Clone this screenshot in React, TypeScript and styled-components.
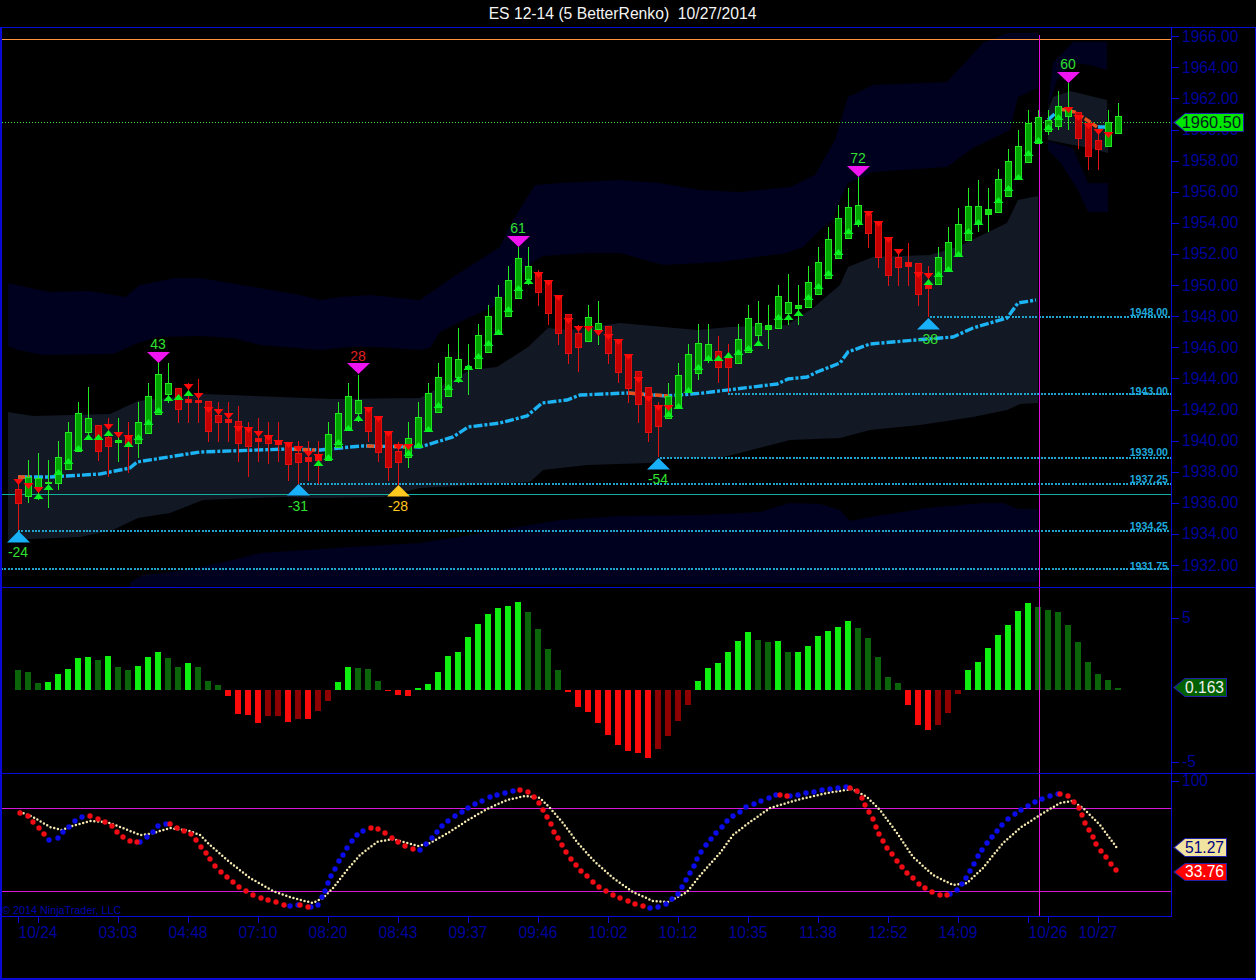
import React from "react";
import styled, { createGlobalStyle } from "styled-components";

// every drawing below uses page pixels, the viewBox of each pane maps them 1:1
const barX = (i: number) => 18.5 + 10 * i;
const pts = (list: number[][]) => list.map((p) => p.join(",")).join(" ");

// [colour, body top, body bottom, wick top, wick bottom, up marker y, down marker y]
type Bar = ["g" | "r", number, number, number, number, number?, number?];

const BARS: Bar[] = [
  ["r", 489, 503, 483, 530, undefined, 482],
  ["g", 477, 496, 460, 503, undefined, 486],
  ["g", 478, 487, 453, 500, 496, 490],
  ["g", 482, 483, 460, 508, 487],
  ["g", 457, 483, 441, 490, 472],
  ["g", 432, 469, 422, 469, 461],
  ["g", 413, 451, 402, 451, 448],
  ["g", 418, 432, 387, 437, 437],
  ["r", 425, 451, 425, 461, 437],
  ["r", 437, 446, 418, 477, 433, 427],
  ["g", 440, 442, 418, 462, undefined, 435],
  ["r", 437, 445, 422, 473, 444, 438],
  ["g", 422, 443, 402, 458, 437],
  ["g", 396, 433, 383, 433, 422],
  ["g", 374, 414, 362, 414, 410],
  ["g", 383, 394, 363, 403, 398],
  ["r", 388, 409, 388, 423, 397],
  ["r", 399, 402, 383, 423, 393, 387],
  ["r", 400, 402, 379, 423, undefined, 396],
  ["r", 401, 431, 401, 442, undefined, 410],
  ["r", 415, 422, 402, 442, undefined, 412],
  ["r", 419, 422, 402, 442, undefined, 416],
  ["r", 421, 443, 406, 462, undefined, 429],
  ["r", 429, 446, 422, 477, undefined, 430],
  ["r", 438, 441, 418, 462, undefined, 434],
  ["r", 437, 443, 422, 464, undefined, 438],
  ["r", 442, 444, 422, 462, undefined, 443],
  ["r", 442, 464, 442, 481, undefined, 445],
  ["r", 453, 462, 441, 484, undefined, 449],
  ["r", 457, 461, 441, 481, undefined, 454],
  ["r", 456, 460, 441, 484, 463, 457],
  ["g", 434, 460, 422, 460, 457],
  ["g", 413, 447, 402, 447, 442],
  ["g", 396, 430, 383, 430, 428],
  ["g", 400, 413, 375, 422, 418],
  ["r", 408, 431, 408, 442, undefined, 410],
  ["r", 418, 452, 418, 462, undefined, 419],
  ["r", 433, 467, 433, 481, undefined, 434],
  ["r", 451, 462, 442, 485, undefined, 447],
  ["g", 438, 457, 422, 468, 453, 447],
  ["g", 417, 447, 402, 447, 445],
  ["g", 393, 431, 383, 431, 429],
  ["g", 377, 412, 363, 412, 405],
  ["g", 357, 396, 344, 396, 387],
  ["g", 359, 377, 328, 383, 379],
  ["g", 366, 368, 344, 395, 367],
  ["g", 335, 368, 324, 368, 356],
  ["g", 316, 352, 305, 352, 343],
  ["g", 297, 333, 285, 333, 332],
  ["g", 280, 316, 266, 316, 309],
  ["g", 258, 298, 247, 298, 288],
  ["g", 266, 279, 247, 285, 281],
  ["r", 272, 292, 270, 306, undefined, 275],
  ["r", 281, 313, 281, 325, undefined, 283],
  ["r", 297, 333, 297, 345, undefined, 298],
  ["r", 314, 353, 314, 364, undefined, 321],
  ["r", 333, 347, 325, 372, undefined, 329],
  ["g", 317, 341, 305, 341, undefined, 329],
  ["g", 323, 329, 301, 345, undefined, 333],
  ["r", 326, 353, 326, 364, undefined, 337],
  ["r", 339, 372, 339, 383, undefined, 342],
  ["r", 355, 388, 355, 403, undefined, 357],
  ["r", 371, 404, 371, 423, undefined, 380],
  ["r", 387, 432, 387, 442, undefined, 399],
  ["r", 406, 426, 402, 457, undefined, 408],
  ["g", 396, 418, 383, 418, 414, 408],
  ["g", 375, 407, 363, 407, 406],
  ["g", 354, 392, 344, 392, 390],
  ["g", 343, 373, 324, 380, 367],
  ["g", 344, 360, 324, 363, 358],
  ["r", 351, 367, 336, 383, 358],
  ["r", 358, 367, 344, 393, 355],
  ["g", 339, 363, 324, 363, 352],
  ["g", 318, 352, 305, 352, 348],
  ["g", 323, 335, 301, 345, 343],
  ["g", 325, 329, 305, 349],
  ["g", 296, 328, 285, 328, 317],
  ["g", 302, 313, 274, 325, 317],
  ["g", 305, 308, 285, 325, 313],
  ["g", 282, 307, 266, 307, 297],
  ["g", 262, 294, 247, 294, 286],
  ["g", 239, 278, 227, 278, 273],
  ["g", 218, 258, 205, 258, 252],
  ["g", 207, 238, 188, 238, 231],
  ["g", 205, 223, 177, 227, 222],
  ["r", 214, 233, 212, 248, undefined, 214],
  ["r", 223, 257, 223, 268, undefined, 224],
  ["r", 239, 275, 239, 286, undefined, 240],
  ["r", 257, 267, 250, 286, undefined, 252],
  ["r", 262, 266, 243, 286],
  ["r", 263, 294, 263, 306, undefined, 275],
  ["r", 283, 288, 266, 317, 282, 276],
  ["g", 257, 284, 247, 284, 274],
  ["g", 242, 271, 227, 271, 269],
  ["g", 224, 256, 208, 256, 254],
  ["g", 206, 240, 188, 240, 231],
  ["g", 206, 224, 180, 232, 222],
  ["g", 209, 214, 188, 232],
  ["g", 179, 212, 169, 212, 200],
  ["g", 161, 196, 149, 196, 188],
  ["g", 146, 178, 130, 178, 177],
  ["g", 123, 162, 110, 162, 153],
  ["g", 117, 143, 110, 143, 140],
  ["g", 120, 131, 110, 135, 127],
  ["g", 106, 126, 91, 130, 117],
  ["g", 108, 116, 83, 130, undefined, 110],
  ["r", 112, 138, 112, 149, undefined, 118],
  ["r", 125, 156, 125, 170, undefined, 126],
  ["r", 140, 149, 130, 170, undefined, 132],
  ["g", 122, 146, 110, 146, undefined, 135],
  ["g", 116, 133, 103, 133],
];

const UPPER_BAND = [
  [8, 283], [30, 288], [50, 292], [90, 291], [125, 297], [140, 285], [175, 278], [200, 278], [230, 283],
  [300, 295], [320, 300], [340, 297], [370, 295], [420, 300], [453, 277], [500, 247], [513, 220], [535, 185],
  [560, 183], [620, 180], [660, 183], [700, 190], [740, 192], [790, 187], [815, 175], [835, 140], [848, 97],
  [873, 85], [947, 82], [983, 43], [1007, 33], [1038, 33], [1038, 88], [1018, 97], [1010, 130], [973, 148],
  [947, 167], [873, 172], [848, 183], [840, 200], [833, 220], [820, 230], [803, 247], [787, 253], [720, 262],
  [663, 265], [620, 253], [587, 253], [543, 256], [533, 262], [497, 305], [470, 317], [440, 332], [430, 348],
  [420, 350], [377, 347], [350, 347], [320, 350], [260, 345], [233, 338], [200, 336], [158, 337], [138, 343],
  [113, 354], [43, 355], [18, 350], [8, 346],
];
const UPPER_TAIL = [
  [1048, 107], [1053, 63], [1073, 42], [1107, 42], [1107, 70], [1090, 65], [1073, 63], [1057, 80],
];
const INNER_BAND = [
  [8, 412], [33, 416], [110, 414], [138, 401], [203, 394], [280, 397], [333, 399], [420, 398], [470, 370],
  [497, 367], [528, 347], [548, 328], [570, 330], [620, 323], [697, 330], [730, 327], [787, 325], [813, 308],
  [840, 285], [848, 267], [873, 257], [930, 255], [957, 247], [1007, 223], [1018, 200], [1038, 196],
  [1038, 403], [1020, 404], [1007, 410], [973, 417], [920, 425], [870, 430], [840, 438], [790, 440], [763, 447],
  [720, 458], [670, 458], [650, 463], [587, 465], [543, 470], [530, 482], [420, 488], [383, 497], [317, 498],
  [283, 497], [203, 500], [170, 513], [138, 518], [113, 530], [80, 537], [8, 540],
];
const INNER_TAIL = [
  [1048, 110], [1053, 97], [1070, 91], [1107, 100], [1108, 153], [1090, 148], [1073, 145], [1048, 140],
];
const LOWER_BAND = [
  [130, 582], [143, 575], [187, 570], [233, 560], [260, 553], [350, 547], [420, 543], [470, 535], [530, 525],
  [560, 520], [620, 516], [700, 515], [760, 512], [790, 503], [820, 504], [840, 510], [850, 521], [870, 517],
  [927, 508], [983, 503], [1003, 503], [1018, 509], [1038, 509], [1038, 582], [130, 587],
];
const LOWER_TAIL = [
  [1048, 141], [1073, 148], [1088, 183], [1108, 183], [1108, 212], [1088, 212], [1078, 190], [1060, 162], [1048, 150],
];

const MA_LINE = [
  [18, 477], [50, 477], [100, 474], [130, 468], [137, 462], [200, 452], [287, 449], [320, 450], [350, 447],
  [363, 446], [420, 447], [453, 437], [468, 427], [500, 423], [527, 416], [542, 403], [567, 400], [580, 395],
  [627, 393], [667, 396], [703, 393], [777, 384], [788, 379], [807, 377], [817, 372], [840, 363], [848, 352],
  [870, 344], [927, 339], [953, 337], [973, 328], [1007, 318], [1018, 303], [1036, 300],
];
const MA_TAIL = [[1048, 120], [1060, 109]];
const MA_TAIL_END = [[1098, 127], [1113, 127]];
const MA_RED = [
  [[18, 477], [30, 477]],
  [[285, 449], [315, 450]],
  [[367, 446], [410, 447]],
  [[628, 393], [668, 396]],
  [[1060, 109], [1075, 112], [1090, 122], [1097, 127]],
];

const LEVELS = [
  { y: 317, from: 930, text: "1948.00", ty: 316 },
  { y: 394, from: 728, text: "1943.00", ty: 395 },
  { y: 458, from: 660, text: "1939.00", ty: 456 },
  { y: 484, from: 300, text: "1937.25", ty: 483 },
  { y: 531, from: 18, text: "1934.25", ty: 530 },
  { y: 569, from: 1, text: "1931.75", ty: 570 },
];

const SIGNALS = [
  { x: 158, y: 352, down: true, fill: "#f014f0", label: "43", ly: 350, tone: "#30e030" },
  { x: 358, y: 363, down: true, fill: "#f014f0", label: "28", ly: 362, tone: "#e02020" },
  { x: 518, y: 236, down: true, fill: "#f014f0", label: "61", ly: 234, tone: "#30e030" },
  { x: 858, y: 166, down: true, fill: "#f014f0", label: "72", ly: 164, tone: "#30e030" },
  { x: 1068, y: 72, down: true, fill: "#f014f0", label: "60", ly: 70, tone: "#30e030" },
  { x: 18, y: 531, down: false, fill: "#18b0f8", label: "-24", ly: 557, tone: "#30e030" },
  { x: 298, y: 484, down: false, fill: "#18b0f8", label: "-31", ly: 511, tone: "#30e030" },
  { x: 398, y: 485, down: false, fill: "#ffc81e", label: "-28", ly: 511, tone: "#ffc81e" },
  { x: 658, y: 458, down: false, fill: "#18b0f8", label: "-54", ly: 484, tone: "#30e030" },
  { x: 928, y: 318, down: false, fill: "#18b0f8", label: "-38", ly: 344, tone: "#30e030" },
];

const HISTOGRAM = [
  20, 18, 7, 8, 16, 21, 32, 33, 30, 34, 23, 20, 24, 33, 38, 32, 23, 27, 23, 9, 5, -6, -24, -25, -33, -26, -26, -32,
  -29, -29, -21, -11, 8, 23, 22, 21, 9, -1, -5, -6, 2, 6, 18, 34, 38, 53, 66, 76, 82, 84, 88, 78, 61, 41, 20, -2, -17,
  -22, -33, -45, -55, -61, -63, -68, -59, -46, -31, -15, 9, 22, 27, 38, 49, 58, 50, 48, 49, 38, 38, 44, 54, 59, 63, 69,
  62, 52, 33, 13, 7, -15, -35, -40, -35, -23, -4, 20, 28, 42, 55, 65, 79, 87, 83, 80, 78, 65, 48, 28, 16, 10, 2,
];
const HIST_FADED = new Set([
  0, 1, 2, 8, 10, 11, 15, 16, 18, 19, 20, 25, 26, 28, 30, 31, 34, 35, 36, 51, 52, 53, 54, 64, 65, 66, 67, 74, 75, 77, 84,
  85, 86, 87, 88, 92, 93, 94, 102, 103, 104, 105, 106, 107, 108, 109, 110,
]);

// fast stochastic, one run per colour change
const FAST_RED = [
  [[20, 813], [28, 816], [33, 822], [39, 828], [44, 834]],
  [[90, 816], [98, 819], [105, 822], [112, 826], [117, 832], [123, 837], [130, 841], [137, 842]],
  [[170, 824], [177, 828], [184, 831], [191, 834], [196, 840], [201, 847], [206, 853], [210, 859], [215, 866], [221, 872],
    [227, 877], [233, 882], [239, 887], [246, 891], [253, 895], [261, 898], [268, 900], [276, 902], [284, 905]],
  [[300, 905], [308, 907]],
  [[371, 828], [378, 829], [385, 833], [392, 838], [398, 842], [405, 846], [413, 849]],
  [[520, 790], [528, 792], [534, 797], [539, 803], [543, 810], [547, 817], [551, 824], [554, 832], [558, 838], [562, 845],
    [566, 852], [571, 859], [576, 865], [581, 871], [587, 876], [593, 882], [599, 887], [606, 891], [613, 895], [620, 898],
    [628, 901], [635, 904], [643, 906]],
  [[780, 795], [787, 796]],
  [[850, 788], [857, 791], [862, 798], [865, 805], [869, 812], [873, 819], [876, 827], [879, 834], [883, 841], [887, 848],
    [892, 854], [897, 861], [902, 867], [907, 873], [913, 878], [919, 884], [925, 888], [932, 892], [940, 895], [947, 895]],
  [[1060, 794], [1068, 796], [1074, 802], [1079, 808], [1082, 815], [1085, 823], [1089, 830], [1093, 837], [1096, 844],
    [1101, 851], [1106, 857], [1111, 864], [1116, 870]],
].flat();
const FAST_BLUE = [
  [49, 840], [58, 838], [63, 832], [69, 827], [75, 821], [82, 817], [140, 842], [147, 837], [153, 832], [158, 826], [166, 824],
  [290, 906], [298, 905], [311, 907], [318, 905], [322, 897], [325, 891], [328, 883], [331, 876], [335, 869], [339, 861],
  [343, 855], [347, 848], [352, 841], [357, 835], [363, 831], [420, 850], [426, 844], [432, 838], [437, 832], [442, 826],
  [448, 821], [455, 816], [462, 812], [468, 808], [475, 804], [482, 801], [490, 797], [497, 795], [505, 793], [513, 791],
  [650, 908], [658, 907], [666, 904], [672, 899], [678, 894], [682, 887], [686, 880], [690, 873], [694, 866], [697, 859],
  [701, 852], [706, 845], [711, 839], [716, 833], [722, 827], [727, 821], [733, 816], [740, 812], [746, 807], [754, 804],
  [761, 801], [769, 798], [776, 795], [790, 796], [798, 795], [806, 793], [814, 792], [822, 790], [830, 789], [838, 788],
  [846, 787], [950, 894], [957, 890], [962, 884], [966, 878], [970, 871], [974, 864], [978, 856], [982, 850], [987, 843],
  [992, 837], [997, 831], [1002, 825], [1008, 819], [1015, 814], [1021, 810], [1028, 806], [1035, 802], [1042, 799],
  [1050, 796], [1058, 794],
];
const SLOW_LINE = [
  [20, 812], [33, 817], [50, 827], [62, 830], [72, 826], [90, 821], [107, 822], [123, 828], [140, 835], [150, 834],
  [170, 828], [190, 831], [200, 835], [210, 845], [227, 860], [250, 878], [273, 891], [293, 898], [313, 903], [323, 898],
  [333, 888], [347, 870], [360, 855], [377, 842], [392, 839], [400, 841], [418, 846], [430, 843], [448, 833], [468, 820],
  [487, 809], [507, 800], [525, 796], [540, 798], [550, 808], [563, 823], [577, 842], [593, 860], [613, 878], [633, 892],
  [653, 901], [668, 902], [687, 892], [703, 872], [720, 853], [733, 835], [750, 822], [770, 808], [797, 800], [827, 793],
  [852, 789], [867, 797], [880, 810], [897, 833], [913, 857], [933, 875], [953, 885], [967, 883], [983, 868], [1003, 843],
  [1020, 828], [1040, 815], [1060, 803], [1072, 801], [1083, 808], [1100, 825], [1117, 848],
];

const PRICE_TICKS = Array.from({ length: 18 }, (_, i) => (1966 - i * 2).toFixed(2));
// bar index of each tick on the time axis, label is optional
const TIME_TICKS: [number, string?][] = [
  [0], [2, "10/24"], [10, "03:03"], [17, "04:48"], [24, "07:10"], [31, "08:20"], [38, "08:43"], [45, "09:37"], [52, "09:46"],
  [59, "10:02"], [66, "10:12"], [73, "10:35"], [80, "11:38"], [87, "12:52"], [94, "14:09"], [101], [103, "10/26"], [108, "10/27"],
];

const GlobalStyle = createGlobalStyle`
  html, body {
    margin: 0;
    padding: 0;
    background: #000;
  }
`;

const Page = styled.div`
  width: 1256px;
  height: 980px;
  background: #000;
  display: flex;
  flex-direction: column;
  overflow: hidden;
  font-family: "Liberation Sans", Arial, sans-serif;
`;

const TitleBar = styled.div`
  height: 27px;
  flex: none;
  padding-right: 11px;
  display: flex;
  align-items: center;
  justify-content: center;
  color: #f4f4f4;
  font-size: 15.7px;
  white-space: pre;
`;

const Frame = styled.div`
  flex: 1;
  min-height: 0;
  display: flex;
  flex-direction: column;
  border: 1px solid #0a0ad8;
  border-width: 1px 1px 2px 2px;
`;

const Pane = styled.div<{ $height: number; $ruled?: boolean }>`
  height: ${({ $height }) => $height}px;
  flex: none;
  display: flex;
  box-sizing: border-box;
  border-bottom: ${({ $ruled }) => ($ruled ? "1px solid #0a0ad8" : "none")};
`;

const Plot = styled.div<{ $closed?: boolean }>`
  width: 1170px;
  flex: none;
  box-sizing: border-box;
  border-right: 1px solid #0a0ad8;
  border-bottom: ${({ $closed }) => ($closed ? "1px solid #0a0ad8" : "none")};
`;

const Canvas = styled.svg`
  display: block;
  overflow: hidden;
`;

const Axis = styled.div<{ $offset: number; $gap: number }>`
  flex: 1;
  position: relative;
  display: flex;
  flex-direction: column;
  gap: ${({ $gap }) => $gap}px;
  padding-top: ${({ $offset }) => $offset}px;
`;

const AxisTick = styled.div`
  height: 0;
  display: flex;
  align-items: center;
  gap: 3px;
  color: #00009c;
  font-size: 15.6px;
  line-height: 16px;

  &::before {
    content: "";
    width: 7px;
    height: 1px;
    background: #0a0ad8;
  }
`;

const Flag = styled.div<{ $top: number; $width: number; $height: number; $fill: string; $ink: string; $size: number }>`
  position: absolute;
  top: ${({ $top }) => $top}px;
  left: 1px;
  width: ${({ $width }) => $width}px;
  height: ${({ $height }) => $height}px;
  background: #2020a8;
  clip-path: polygon(0 50%, 12px 0, 100% 0, 100% 100%, 12px 100%);
  z-index: 2;

  &::before {
    content: "";
    position: absolute;
    inset: 1px 1px 1px 2px;
    background: ${({ $fill }) => $fill};
    clip-path: polygon(0 50%, 10px 0, 100% 0, 100% 100%, 10px 100%);
  }

  span {
    position: absolute;
    right: 3px;
    top: 0;
    bottom: 0;
    display: flex;
    align-items: center;
    color: ${({ $ink }) => $ink};
    font-size: ${({ $size }) => $size}px;
  }
`;

const TimeAxis = styled.div`
  flex: 1;
  display: grid;
  grid-template-columns: repeat(111, 10px);
  padding-left: 11px;
  align-content: start;
`;

const TimeTick = styled.div<{ $bar: number }>`
  grid-column: ${({ $bar }) => $bar + 1};
  grid-row: 1;
  height: 31px;
  display: flex;
  flex-direction: column;
  align-items: center;
  gap: 1px;
  color: #00009c;
  font-size: 15.6px;
  white-space: nowrap;

  &::before {
    content: "";
    width: 1px;
    height: 6px;
    flex: none;
    background: #0a0ad8;
  }
`;

const Band = styled.polygon<{ $tone: "navy" | "slate" }>`
  fill: ${({ $tone }) => ($tone === "navy" ? "#00001f" : "#121824")};
`;

const Rule = styled.line<{ $tone: string; $dash?: string }>`
  stroke: ${({ $tone }) => $tone};
  stroke-width: 1;
  stroke-dasharray: ${({ $dash }) => $dash || "none"};
  shape-rendering: crispEdges;
`;

const LevelLine = styled.line`
  stroke: #1fa2cc;
  stroke-width: 2;
  stroke-dasharray: 2 1.4;
  shape-rendering: crispEdges;
`;

const LevelText = styled.text`
  fill: #1fa8dc;
  font-family: "Liberation Sans", Arial, sans-serif;
  font-size: 10.6px;
  font-weight: bold;
  text-anchor: end;
`;

const MaLine = styled.polyline<{ $tone: "cyan" | "red" }>`
  fill: none;
  stroke: ${({ $tone }) => ($tone === "cyan" ? "#1cb4f4" : "#e8501c")};
  stroke-width: 3.4;
  stroke-dasharray: ${({ $tone }) => ($tone === "cyan" ? "9 2 3 2" : "7 2")};
`;

const Wick = styled.line<{ $up: boolean }>`
  stroke: ${({ $up }) => ($up ? "#22e822" : "#e01212")};
  stroke-width: 1;
  shape-rendering: crispEdges;
`;

const Body = styled.rect<{ $up: boolean; $solid: boolean }>`
  fill: ${({ $up, $solid }) => ($solid ? ($up ? "#10e010" : "#f01010") : $up ? "#00a400" : "#c40000")};
  stroke: ${({ $up }) => ($up ? "#22e822" : "#e01212")};
  stroke-width: 1;
  shape-rendering: crispEdges;
`;

const Marker = styled.polygon<{ $up: boolean }>`
  fill: ${({ $up }) => ($up ? "#08f020" : "#ff0808")};
`;

const SignalShape = styled.polygon<{ $fill: string }>`
  fill: ${({ $fill }) => $fill};
`;

const SignalLabel = styled.text<{ $tone: string }>`
  fill: ${({ $tone }) => $tone};
  font-family: "Liberation Sans", Arial, sans-serif;
  font-size: 14px;
  text-anchor: middle;
`;

const HistBar = styled.rect<{ $up: boolean; $faded: boolean }>`
  fill: ${({ $up, $faded }) => ($up ? ($faded ? "#0a640a" : "#10f010") : $faded ? "#8c0000" : "#ff0a0a")};
  shape-rendering: crispEdges;
`;

const FastDot = styled.circle<{ $tone: "red" | "blue" }>`
  fill: ${({ $tone }) => ($tone === "red" ? "#f00c14" : "#0c0ce8")};
`;

const SlowLine = styled.polyline`
  fill: none;
  stroke: #f4e8b0;
  stroke-width: 2.5;
  stroke-linecap: round;
  stroke-linejoin: round;
  stroke-dasharray: 0 3.8;
`;

const Credit = styled.text`
  fill: #0000b0;
  font-family: "Liberation Sans", Arial, sans-serif;
  font-size: 10.8px;
`;

const Candle: React.FC<{ bar: Bar; index: number }> = ({ bar, index }) => {
  const [tone, top, bottom, high, low, upAt, downAt] = bar;
  const up = tone === "g";
  const cx = barX(index);
  const solid = bottom - top <= 5;
  return (
    <g>
      <Wick $up={up} x1={cx} x2={cx} y1={high} y2={low} />
      <Body $up={up} $solid={solid} x={cx - 3} y={top + 0.5} width={6} height={bottom - top} />
      {downAt !== undefined && (
        <Marker $up={false} points={pts([[cx - 5, downAt - 3], [cx + 5, downAt - 3], [cx, downAt + 3]])} />
      )}
      {upAt !== undefined && (
        <Marker $up points={pts([[cx, upAt - 3], [cx + 5, upAt + 3], [cx - 5, upAt + 3]])} />
      )}
    </g>
  );
};

const Signal: React.FC<(typeof SIGNALS)[number]> = ({ x, y, down, fill, label, ly, tone }) => (
  <g>
    <SignalShape
      $fill={fill}
      points={pts(
        down
          ? [[x - 11, y], [x + 12, y], [x + 0.5, y + 11]]
          : [[x + 0.5, y], [x + 12, y + 11.5], [x - 11, y + 11.5]]
      )}
    />
    <SignalLabel $tone={tone} x={x} y={down ? ly - 1 : ly}>
      {label}
    </SignalLabel>
  </g>
);

const PriceChart: React.FC = () => (
  <Canvas width={1169} height={559} viewBox="2 28 1169 559">
    <Band $tone="navy" points={pts(UPPER_BAND)} />
    <Band $tone="navy" points={pts(UPPER_TAIL)} />
    <Band $tone="navy" points={pts(LOWER_BAND)} />
    <Band $tone="navy" points={pts(LOWER_TAIL)} />
    <Band $tone="slate" points={pts(INNER_BAND)} />
    <Band $tone="slate" points={pts(INNER_TAIL)} />

    <Rule $tone="#ff9440" x1={2} x2={1171} y1={39.5} y2={39.5} />
    <Rule $tone="#38e038" $dash="1 2" x1={2} x2={1171} y1={122.5} y2={122.5} />
    <Rule $tone="#10b0a0" x1={2} x2={1171} y1={494.5} y2={494.5} />
    {LEVELS.map((l) => (
      <g key={l.text}>
        <LevelLine x1={l.from} x2={1171} y1={l.y} y2={l.y} />
        <LevelText x={1168} y={l.ty}>
          {l.text}
        </LevelText>
      </g>
    ))}

    <MaLine $tone="cyan" points={pts(MA_LINE)} />
    <MaLine $tone="cyan" points={pts(MA_TAIL)} />
    <MaLine $tone="cyan" points={pts(MA_TAIL_END)} />
    {MA_RED.map((seg, i) => (
      <MaLine key={i} $tone="red" points={pts(seg)} />
    ))}

    <Rule $tone="#e010e0" x1={1039.5} x2={1039.5} y1={35} y2={587} />
    {BARS.map((bar, i) => (
      <Candle key={i} bar={bar} index={i} />
    ))}
    {SIGNALS.map((s) => (
      <Signal key={s.x} {...s} />
    ))}
  </Canvas>
);

const HistogramChart: React.FC = () => (
  <Canvas width={1169} height={185} viewBox="2 588 1169 185">
    {HISTOGRAM.map((v, i) => (
      <HistBar
        key={i}
        $up={v >= 0}
        $faded={HIST_FADED.has(i)}
        x={15 + 10 * i}
        y={v >= 0 ? 690 - v : 690}
        width={6}
        height={Math.abs(v)}
      />
    ))}
    <Rule $tone="#e010e0" x1={1039.5} x2={1039.5} y1={588} y2={773} />
  </Canvas>
);

const StochasticChart: React.FC = () => (
  <Canvas width={1169} height={142} viewBox="2 774 1169 142">
    <Rule $tone="#d818d8" x1={2} x2={1171} y1={808.5} y2={808.5} />
    <Rule $tone="#d818d8" x1={2} x2={1171} y1={891.5} y2={891.5} />
    <Rule $tone="#e010e0" x1={1039.5} x2={1039.5} y1={774} y2={916} />
    <SlowLine points={pts(SLOW_LINE)} />
    {FAST_BLUE.map(([x, y]) => (
      <FastDot key={`${x}-${y}`} $tone="blue" cx={x} cy={y} r={2.7} />
    ))}
    {FAST_RED.map(([x, y]) => (
      <FastDot key={`${x}-${y}`} $tone="red" cx={x} cy={y} r={2.7} />
    ))}
    <Credit x={2} y={914}>
      © 2014 NinjaTrader, LLC
    </Credit>
  </Canvas>
);

export default function App() {
  return (
    <Page>
      <GlobalStyle />
      <TitleBar>{"ES 12-14 (5 BetterRenko)  10/27/2014"}</TitleBar>
      <Frame>
        <Pane $height={560} $ruled>
          <Plot>
            <PriceChart />
          </Plot>
          <Axis $offset={8.7} $gap={31.11}>
            {PRICE_TICKS.map((t) => (
              <AxisTick key={t}>{t}</AxisTick>
            ))}
            <Flag $top={85} $width={71} $height={19} $fill="#00e800" $ink="#002020" $size={16.4}>
              <span>1960.50</span>
            </Flag>
          </Axis>
        </Pane>
        <Pane $height={186} $ruled>
          <Plot>
            <HistogramChart />
          </Plot>
          <Axis $offset={30} $gap={144}>
            <AxisTick>5</AxisTick>
            <AxisTick>-5</AxisTick>
            <Flag $top={90} $width={54} $height={19} $fill="#006000" $ink="#f0f0f0" $size={15.6}>
              <span>0.163</span>
            </Flag>
          </Axis>
        </Pane>
        <Pane $height={143}>
          <Plot $closed>
            <StochasticChart />
          </Plot>
          <Axis $offset={7} $gap={100}>
            <AxisTick>100</AxisTick>
            <Flag $top={64} $width={54} $height={19} $fill="#f0e4a0" $ink="#000080" $size={15.6}>
              <span>51.27</span>
            </Flag>
            <Flag $top={89} $width={54} $height={18} $fill="#ff0000" $ink="#ffffff" $size={15.6}>
              <span>33.76</span>
            </Flag>
          </Axis>
        </Pane>
        <TimeAxis>
          {TIME_TICKS.map(([bar, label]) => (
            <TimeTick key={bar} $bar={bar}>
              {label}
            </TimeTick>
          ))}
        </TimeAxis>
      </Frame>
    </Page>
  );
}
